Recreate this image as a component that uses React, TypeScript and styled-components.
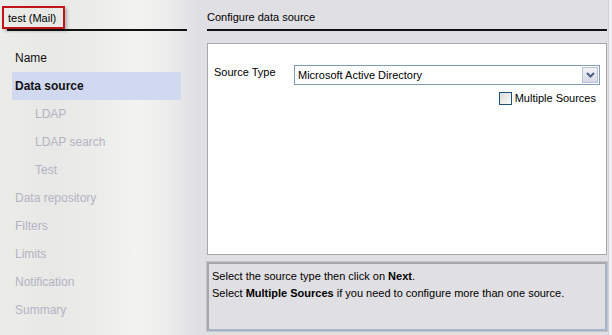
import styled, { createGlobalStyle } from 'styled-components'

const GlobalStyle = createGlobalStyle`
    html, body {
        margin: 0;
        padding: 0;
        background: #e0dfe3;
    }
    * {
        box-sizing: border-box;
    }
`

const steps = [
    { label: 'Name', level: 0, state: 'done' },
    { label: 'Data source', level: 0, state: 'active' },
    { label: 'LDAP', level: 1, state: 'todo' },
    { label: 'LDAP search', level: 1, state: 'todo' },
    { label: 'Test', level: 1, state: 'todo' },
    { label: 'Data repository', level: 0, state: 'todo' },
    { label: 'Filters', level: 0, state: 'todo' },
    { label: 'Limits', level: 0, state: 'todo' },
    { label: 'Notification', level: 0, state: 'todo' },
    { label: 'Summary', level: 0, state: 'todo' },
]

const App = () => {
    return (
        <>
            <GlobalStyle />
            <Window>
                <Sidebar>
                    <SideHeader>
                        <TitleMark>test (Mail)</TitleMark>
                    </SideHeader>
                    <StepList>
                        {steps.map((step) => (
                            <Step
                                key={step.label}
                                $level={step.level}
                                $state={step.state}
                            >
                                {step.label}
                            </Step>
                        ))}
                    </StepList>
                </Sidebar>
                <Main>
                    <MainHeader>Configure data source</MainHeader>
                    <Panel>
                        <FieldRow>
                            <FieldLabel>Source Type</FieldLabel>
                            <Combo>
                                <ComboText>Microsoft Active Directory</ComboText>
                                <ComboButton>
                                    <svg width="9" height="6" viewBox="0 0 9 6">
                                        <path
                                            d="M1 1 L4.5 4.5 L8 1"
                                            fill="none"
                                            stroke="#4d6185"
                                            strokeWidth="2"
                                        />
                                    </svg>
                                </ComboButton>
                            </Combo>
                        </FieldRow>
                        <CheckRow>
                            <CheckBox />
                            <span>Multiple Sources</span>
                        </CheckRow>
                    </Panel>
                    <HelpBox>
                        Select the source type then click on <b>Next</b>.
                        <br />
                        Select <b>Multiple Sources</b> if you need to configure
                        more than one source.
                    </HelpBox>
                </Main>
                <EdgeStrip />
            </Window>
        </>
    )
}

export default App

const Window = styled.div`
    width: 612px;
    height: 335px;
    display: flex;
    flex-direction: row;
    overflow: hidden;
    font-family: 'Liberation Sans', Arial, sans-serif;
`

const Sidebar = styled.div`
    width: 197px;
    flex-shrink: 0;
    padding: 6px 10px 0 2px;
    background:
        linear-gradient(
            90deg,
            rgba(236, 236, 233, 1) 0%,
            rgba(232, 232, 230, 1) 25%,
            rgba(236, 236, 234, 1) 50%,
            rgba(243, 243, 241, 1) 70%,
            rgba(236, 236, 236, 1) 85%,
            rgba(224, 224, 226, 1) 100%
        );
`

const SideHeader = styled.div`
    display: flex;
    border-bottom: 2px solid #111;
    margin-left: 5px;
    height: 25px;
`

const TitleMark = styled.div`
    margin-left: -5px;
    height: 23px;
    width: 63px;
    padding: 4px 0 0 4px;
    border: 2px solid #c0151b;
    font-size: 11px;
    color: #000;
    box-shadow: 2px 2px 3px rgba(0, 0, 0, 0.25);
`

const StepList = styled.div`
    display: flex;
    flex-direction: column;
    margin-top: 13px;
    margin-right: 6px;
    padding-left: 10px;
`

const Step = styled.div`
    height: 28px;
    display: flex;
    align-items: center;
    padding-left: ${(props) => (props.$level ? 23 : 3)}px;
    font-size: 12px;
    font-weight: ${(props) => (props.$state === 'active' ? 'bold' : 'normal')};
    color: ${(props) => (props.$state === 'todo' ? '#b3b3c3' : '#111')};
    background: ${(props) =>
        props.$state === 'active' ? '#d1d9f1' : 'transparent'};
`

const Main = styled.div`
    flex: 1;
    display: flex;
    flex-direction: column;
    padding: 6px 1px 4px 10px;
    background: #e0dfe3;
    font-size: 11px;
    color: #000;
`

const MainHeader = styled.div`
    height: 25px;
    padding: 5px 0 0 0;
    border-bottom: 2px solid #111;
`

const Panel = styled.div`
    margin-top: 12px;
    height: 213px;
    background: #fff;
    border: 1px solid #a7a6aa;
    padding: 20px 6px 0 6px;
`

const FieldRow = styled.div`
    display: flex;
    align-items: flex-start;
`

const FieldLabel = styled.div`
    width: 80px;
    padding-top: 2px;
`

const Combo = styled.div`
    flex: 1;
    height: 20px;
    display: flex;
    align-items: center;
    border: 1px solid #7f9db9;
    margin-top: 1px;
`

const ComboText = styled.div`
    flex: 1;
    padding-left: 3px;
`

const ComboButton = styled.div`
    width: 16px;
    height: 16px;
    margin-right: 1px;
    display: flex;
    align-items: center;
    justify-content: center;
    border: 1px solid #b9c3d6;
    background: linear-gradient(180deg, #f2f2f6 0%, #d6d9e4 100%);
`

const CheckRow = styled.div`
    display: flex;
    justify-content: flex-end;
    align-items: center;
    gap: 3px;
    margin-top: 7px;
    padding-right: 4px;
`

const CheckBox = styled.div`
    width: 13px;
    height: 13px;
    border: 1px solid #1c5180;
    background: linear-gradient(135deg, #dcdcd7 0%, #fbfbf9 100%);
`

const HelpBox = styled.div`
    margin-top: 7px;
    height: 69px;
    border: 2px solid #a5b5c9;
    border-top-color: #a7a6aa;
    border-left-color: #a7a6aa;
    outline: 1px solid #c5c4c8;
    padding: 4px 3px;
    line-height: 17px;
    background: #e0dfe3;
`

const EdgeStrip = styled.div`
    width: 4px;
    flex-shrink: 0;
    background: #efeff1;
    border-left: 1px solid #d2d1d5;
`
